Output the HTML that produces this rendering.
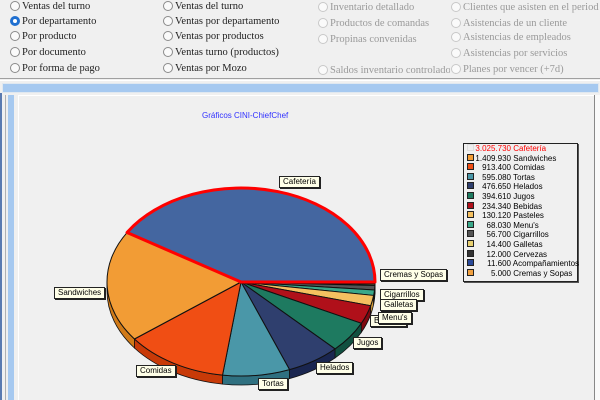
<!DOCTYPE html>
<html><head><meta charset="utf-8"><style>
body{margin:0;width:600px;height:400px;overflow:hidden;background:#f0f0f0;position:relative;font-family:"Liberation Serif",serif}
.r{position:absolute;font-size:10.5px;color:#222;white-space:nowrap;line-height:14px;overflow:hidden}
.r i{display:inline-block;width:10px;height:10px;border:1px solid #8a8a8a;border-radius:50%;background:#fafafa;vertical-align:-2px;margin-right:2px;box-sizing:border-box}
.g{color:#9a9a9a}.g i{border-color:#c8c8c8}
.sel i{border:3px solid #1f6fd0;background:#fff}
.lb{position:absolute;font:8px "Liberation Sans",sans-serif;background:#ffffe8;border:1px solid #222;box-shadow:1px 1px 0 #222;padding:0 3px;line-height:10px;white-space:nowrap}
#leg{position:absolute;left:463px;top:143px;width:113px;height:137px;border:1px solid #222;box-shadow:1px 1px 0 #555;background:#f0f0f0;font:8px "Liberation Sans",sans-serif}
#leg div{height:9.6px;line-height:9.6px;white-space:nowrap;position:relative}
#leg span{display:inline-block;width:5px;height:5px;border:1px solid #222;margin:0 1px 0 3px;vertical-align:0}
#leg b{font-weight:normal;display:inline-block;width:36px;text-align:right}
</style></head><body>
<div class="r" style="left:10px;top:0px"><i></i>Ventas del turno</div>
<div class="r sel" style="left:10px;top:15px"><i></i>Por departamento</div>
<div class="r" style="left:10px;top:30px"><i></i>Por producto</div>
<div class="r" style="left:10px;top:46px"><i></i>Por documento</div>
<div class="r" style="left:10px;top:62px"><i></i>Por forma de pago</div>
<div class="r" style="left:163px;top:0px"><i></i>Ventas del turno</div>
<div class="r" style="left:163px;top:15px"><i></i>Ventas por departamento</div>
<div class="r" style="left:163px;top:30px"><i></i>Ventas por productos</div>
<div class="r" style="left:163px;top:46px"><i></i>Ventas turno (productos)</div>
<div class="r" style="left:163px;top:62px"><i></i>Ventas por Mozo</div>
<div class="r g" style="left:318px;top:1px"><i></i>Inventario detallado</div>
<div class="r g" style="left:318px;top:17px"><i></i>Productos de comandas</div>
<div class="r g" style="left:318px;top:33px"><i></i>Propinas convenidas</div>
<div class="r g" style="left:318px;top:64px;width:132px"><i></i>Saldos inventario controlado (s</div>
<div class="r g" style="left:451px;top:1px;width:148px"><i></i>Clientes que asisten en el periodo</div>
<div class="r g" style="left:451px;top:17px"><i></i>Asistencias de un cliente</div>
<div class="r g" style="left:451px;top:31px"><i></i>Asistencias de empleados</div>
<div class="r g" style="left:451px;top:47px"><i></i>Asistencias por servicios</div>
<div class="r g" style="left:451px;top:63px"><i></i>Planes por vencer (+7d)</div>
<div style="position:absolute;left:0;top:78px;width:600px;height:1px;background:#a0a0a0"></div>
<div style="position:absolute;left:0;top:80px;width:600px;height:1px;background:#fff"></div>
<div style="position:absolute;left:2px;top:83px;width:595px;height:8px;background:#a6c9f0;border:1px solid #e0e8f0"></div>
<div style="position:absolute;left:0;top:93px;width:2px;height:307px;background:#5a7ab0"></div>
<div style="position:absolute;left:5px;top:95px;width:1px;height:305px;background:#b0b0b0"></div>
<div style="position:absolute;left:8px;top:95px;width:6px;height:305px;background:#a6c9f0"></div>
<div style="position:absolute;left:18px;top:95px;width:1px;height:305px;background:#fff"></div>
<div style="position:absolute;left:19px;top:95px;width:575px;height:1px;background:#fff"></div>
<div style="position:absolute;left:594px;top:95px;width:1px;height:305px;background:#888"></div>
<div style="position:absolute;left:595px;top:95px;width:5px;height:305px;background:#fafafa"></div>
<div style="position:absolute;left:202px;top:111px;font:8px 'Liberation Sans',sans-serif;color:#3030ff">Gráficos CINI-ChiefChef</div>
<svg id="pie" width="600" height="400" style="position:absolute;left:0;top:0"></svg>
<div id="leg">
<div style="color:#f00"><span style="border-color:#ddd;background:#eee"></span><b>3.025.730</b> Cafetería</div>
<div><span style="background:#f29c35"></span><b>1.409.930</b> Sandwiches</div>
<div><span style="background:#f04e14"></span><b>913.400</b> Comidas</div>
<div><span style="background:#4a97a8"></span><b>595.080</b> Tortas</div>
<div><span style="background:#2f3f6e"></span><b>476.650</b> Helados</div>
<div><span style="background:#1e7a60"></span><b>394.610</b> Jugos</div>
<div><span style="background:#b0101a"></span><b>234.340</b> Bebidas</div>
<div><span style="background:#f5c060"></span><b>130.120</b> Pasteles</div>
<div><span style="background:#3aa88a"></span><b>68.030</b> Menu's</div>
<div><span style="background:#555"></span><b>56.700</b> Cigarrillos</div>
<div><span style="background:#e8d070"></span><b>14.400</b> Galletas</div>
<div><span style="background:#333"></span><b>12.000</b> Cervezas</div>
<div><span style="background:#2a4a9a"></span><b>11.600</b> Acompañamientos</div>
<div><span style="background:#f0a040"></span><b>5.000</b> Cremas y Sopas</div>
</div>
<div class="lb" style="left:279px;top:176px">Cafetería</div>
<div class="lb" style="left:54px;top:287px">Sandwiches</div>
<div class="lb" style="left:136px;top:365px">Comidas</div>
<div class="lb" style="left:258px;top:378px">Tortas</div>
<div class="lb" style="left:316px;top:362px">Helados</div>
<div class="lb" style="left:353px;top:337px">Jugos</div>
<div class="lb" style="left:370px;top:315px">Bebidas</div>
<div class="lb" style="left:380px;top:269px">Cremas y Sopas</div>
<div class="lb" style="left:380px;top:289px">Cigarrillos</div>
<div class="lb" style="left:380px;top:299px">Galletas</div>
<div class="lb" style="left:378px;top:312px">Menu's</div>
<script>
var v=[3025730,1409930,913400,595080,476650,394610,234340,130120,68030,56700,14400,12000,11600,5000];
var c=["#4466a0","#f29c35","#f04e14","#4a97a8","#2f3f6e","#1e7a60","#b0101a","#f5c060","#3aa88a","#555555","#e8d070","#333333","#2a4a9a","#f0a040"];
var sd=["#2c4a80","#d07a18","#c83a08","#2f7080","#1a2650","#115040","#800810","#d09a38","#207060","#333","#b8a040","#222","#183070","#c07820"];
var cx=241,cy=282,rx=134,ry=94,d=9,T=v.reduce(function(a,b){return a+b},0);
function P(a,dy){return [cx+rx*Math.cos(a),cy-ry*Math.sin(a)+(dy||0)]}
var s="",a=0,arcs=[];
for(var i=0;i<v.length;i++){var b=a+v[i]/T*2*Math.PI;arcs.push([a,b]);a=b;}
for(var i=0;i<v.length;i++){var a0=Math.max(arcs[i][0],Math.PI),a1=Math.min(arcs[i][1],2*Math.PI);if(a1<=a0)continue;
var p0=P(a0),p1=P(a1),q0=P(a0,d),q1=P(a1,d);
s+='<path d="M'+p0+' A'+rx+','+ry+' 0 0 0 '+p1+' L'+q1+' A'+rx+','+ry+' 0 0 1 '+q0+' Z" fill="'+sd[i]+'" stroke="#111" stroke-width="0.8"/>';}
for(var i=v.length-1;i>=0;i--){var a0=arcs[i][0],a1=arcs[i][1],p0=P(a0),p1=P(a1),lg=(a1-a0)>Math.PI?1:0;
s+='<path d="M'+cx+','+cy+' L'+p0+' A'+rx+','+ry+' 0 '+lg+' 0 '+p1+' Z" fill="'+c[i]+'" stroke="'+(i==0?'#ff0000':'#111')+'" stroke-width="'+(i==0?3:1)+'" stroke-linejoin="round"/>';}
var sv=document.getElementById('pie');sv.innerHTML=s;
var t=sv.querySelectorAll('path');sv.appendChild(t[t.length-1]);
</script>
</body></html>
